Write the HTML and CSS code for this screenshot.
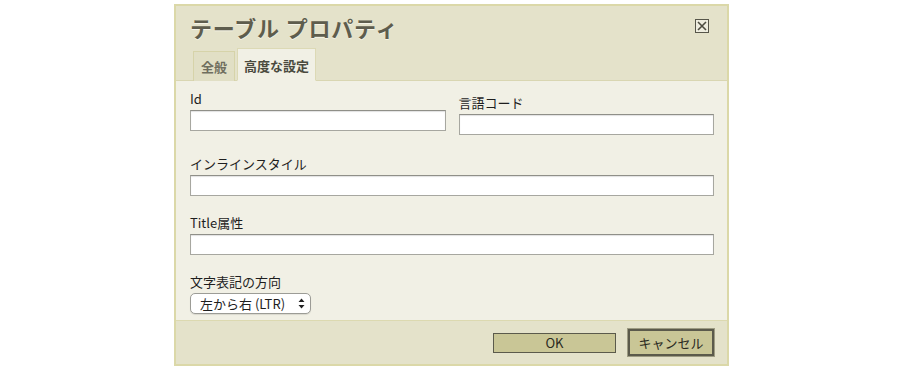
FILE: index.html
```html
<!DOCTYPE html>
<html>
<head>
  <meta charset="UTF-8">
  <link rel="stylesheet" href="styles.css">
</head>
<body>
  <div class="dialog">
    <div class="dialog-header">
      <div class="title-row">
        <div class="title">テーブル プロパティ</div>
        <a class="close-btn" title="閉じる">
          <svg width="10" height="10" viewBox="0 0 10 10">
            <path d="M1 1 L9 9 M9 1 L1 9" stroke="#4d4c40" stroke-width="1.6" fill="none"/>
          </svg>
        </a>
      </div>
      <div class="tabs">
        <a class="tab">全般</a>
        <a class="tab tab-active">高度な設定</a>
      </div>
    </div>

    <div class="dialog-body">
      <div class="field-row">
        <div class="field">
          <label class="field-label">Id</label>
          <input class="text-input" type="text">
        </div>
        <div class="field field-lang">
          <label class="field-label">言語コード</label>
          <input class="text-input" type="text">
        </div>
      </div>
      <div class="field">
        <label class="field-label">インラインスタイル</label>
        <input class="text-input" type="text">
      </div>
      <div class="field">
        <label class="field-label">Title属性</label>
        <input class="text-input" type="text">
      </div>
      <div class="field">
        <label class="field-label">文字表記の方向</label>
        <div class="select-wrap">
          <select class="select-input">
            <option>左から右 (LTR)</option>
            <option>右から左 (RTL)</option>
          </select>
          <svg class="select-arrow" width="7" height="11" viewBox="0 0 7 11">
            <path d="M3.5 0.5 L6.5 4 L0.5 4 Z M3.5 10.5 L6.5 7 L0.5 7 Z" fill="#222"/>
          </svg>
        </div>
      </div>
    </div>

    <div class="dialog-footer">
      <a class="btn btn-ok">OK</a>
      <a class="btn btn-cancel">キャンセル</a>
    </div>
  </div>
</body>
</html>
```

FILE: styles.css
```css
body {
  margin: 0;
  padding: 0;
  background: #ffffff;
  font-family: "Liberation Sans", "Noto Sans CJK JP", sans-serif;
  color: #222222;
}

.dialog {
  margin: 4px 0 0 174px;
  width: 555px;
  height: 362px;
  box-sizing: border-box;
  border: 2px solid #dbd8a8;
  display: flex;
  flex-direction: column;
  background: #e4e2ca;
}

/* header with title and tabs */
.dialog-header {
  height: 74px;
  display: flex;
  flex-direction: column;
  justify-content: space-between;
  border-bottom: 1px solid #d9d6b2;
}

.title-row {
  display: flex;
  justify-content: space-between;
  align-items: flex-start;
  padding: 6px 18px 0 14px;
}

.title {
  font-family: "Noto Sans CJK JP", sans-serif;
  font-size: 22px;
  font-weight: bold;
  line-height: 30px;
  color: #5e5d4d;
  text-shadow: 0 1px 0 #f4f3e6;
  letter-spacing: 0.8px;
}

.close-btn {
  margin-top: 7px;
  width: 14px;
  height: 14px;
  box-sizing: border-box;
  border: 1px solid #57564a;
  background: #eeeddf;
  display: flex;
  align-items: center;
  justify-content: center;
}

.tabs {
  display: flex;
  align-items: flex-end;
  gap: 2px;
  padding-left: 17px;
  margin-bottom: -1px;
}

.tab {
  font-family: "Noto Sans CJK JP", sans-serif;
  font-size: 13px;
  font-weight: bold;
  color: #6f6e5e;
  height: 30px;
  line-height: 30px;
  padding: 0 7px;
  box-sizing: border-box;
  border: 1px solid #d6d3a9;
  border-bottom: none;
  background: #e1dfc5;
}

.tab-active {
  height: 33px;
  line-height: 33px;
  padding: 0 6px;
  color: #4a4a3e;
  background: #f1f0e5;
  border-color: #dcd9b5;
  border-bottom: 1px solid #f1f0e5;
}

/* form body */
.dialog-body {
  flex: 1;
  background: #f1f0e5;
  padding: 10px 13px 0 14px;
  display: flex;
  flex-direction: column;
  gap: 19px;
}

.field-row {
  display: flex;
  gap: 13px;
  margin-bottom: 2px;
}

.field-row .field {
  flex: 1;
}

.field-lang {
  padding-top: 4px;
}

.field {
  display: flex;
  flex-direction: column;
}

.field-label {
  font-family: "Noto Sans CJK JP", sans-serif;
  font-size: 13px;
  line-height: 16px;
  margin-bottom: 3px;
  color: #1e1e1e;
}

.text-input {
  height: 21px;
  box-sizing: border-box;
  margin: 0;
  border: 1px solid #a7a7a0;
  border-top-color: #8f8f88;
  box-shadow: inset 0 1px 1px rgba(0, 0, 0, 0.12);
  background: #ffffff;
  font-size: 13px;
  padding: 0 3px;
}

.select-wrap {
  position: relative;
  width: 121px;
  height: 21px;
}

.select-input {
  appearance: none;
  -webkit-appearance: none;
  width: 100%;
  height: 100%;
  margin: 0;
  border: 1px solid #9c9c96;
  border-radius: 5px;
  background: #ffffff;
  font-family: "Noto Sans CJK JP", sans-serif;
  font-size: 13px;
  color: #1e1e1e;
  padding: 0 0 0 9px;
  box-shadow: 0 1px 1px rgba(0, 0, 0, 0.1);
}

.select-arrow {
  position: absolute;
  right: 6px;
  top: 5px;
  pointer-events: none;
}

/* footer buttons */
.dialog-footer {
  height: 44px;
  box-sizing: border-box;
  border-top: 1px solid #dcd9b0;
  display: flex;
  justify-content: flex-end;
  align-items: center;
  gap: 12px;
  padding-right: 13px;
  background: #e4e2ca;
}

.btn {
  font-family: "Noto Sans CJK JP", sans-serif;
  font-size: 13px;
  color: #2a2a22;
  background: #c9c696;
  box-sizing: border-box;
  display: flex;
  align-items: center;
  justify-content: center;
}

.btn-ok {
  width: 123px;
  height: 20px;
  border: 1px solid #5b5a4b;
}

.btn-cancel {
  width: 86px;
  height: 27px;
  border: 2px solid #5b5a4b;
  outline: 1px solid #9d9b82;
}
```
